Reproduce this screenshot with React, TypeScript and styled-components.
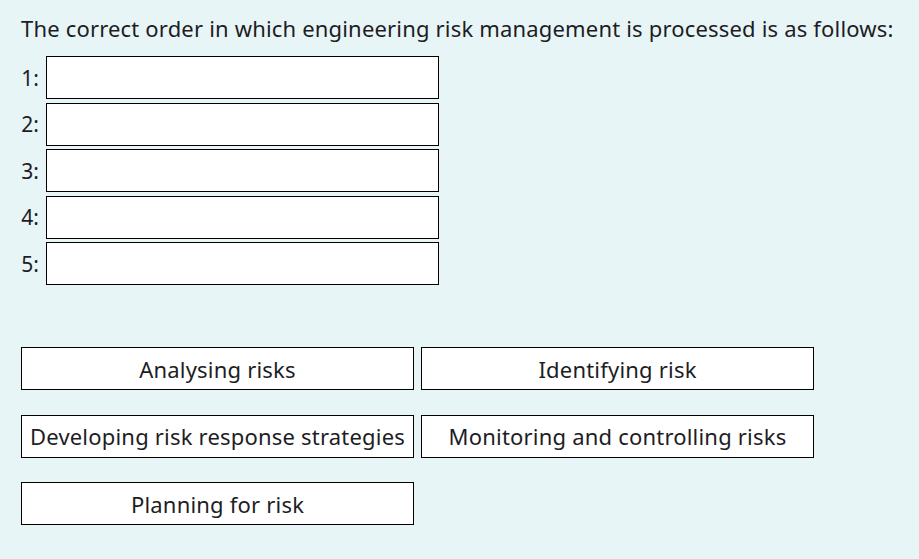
import React, {FC} from 'react';
import styled, {createGlobalStyle} from "styled-components";

const steps = [1, 2, 3, 4, 5]

const options = [
    'Analysing risks',
    'Identifying risk',
    'Developing risk response strategies',
    'Monitoring and controlling risks',
    'Planning for risk',
]

const App: FC = () => {
    return (
        <>
            <GlobalStyle/>
            <Page>
                <Question>
                    The correct order in which engineering risk management is processed is as follows:
                </Question>

                <Slots>
                    {steps.map(n => (
                        <Slot key={n}>
                            <SlotLabel>{n}:</SlotLabel>
                            <DropBox/>
                        </Slot>
                    ))}
                </Slots>

                <Options>
                    {options.map(text => (
                        <Option key={text}>{text}</Option>
                    ))}
                </Options>
            </Page>
        </>
    );
};

const GlobalStyle = createGlobalStyle`
  html, body {
    margin: 0;
    padding: 0;
    background-color: #e7f5f7;
  }

  body {
    font-family: "Noto Sans", "Open Sans", sans-serif;
    color: #1d1d24;
  }
`

const Page = styled.div`
  width: 919px;
  height: 559px;
  box-sizing: border-box;
  padding: 12px 0 0 21px;
`

const Question = styled.div`
  font-size: 22px;
  line-height: 32px;
  letter-spacing: 0.18px;
  margin-bottom: 12px;
`

const Slots = styled.div`
  display: flex;
  flex-direction: column;
  gap: 3.5px;
`

const Slot = styled.div`
  display: flex;
  align-items: center;
`

const SlotLabel = styled.span`
  width: 18px;
  margin-right: 7px;
  text-align: right;
  font-size: 21px;
`

const DropBox = styled.div`
  width: 393px;
  height: 43px;
  box-sizing: border-box;
  background-color: #fff;
  border: 1px solid #000;
`

const Options = styled.div`
  display: grid;
  grid-template-columns: 393px 393px;
  column-gap: 7px;
  row-gap: 24.5px;
  margin-top: 62px;
`

const Option = styled.div`
  height: 43px;
  box-sizing: border-box;
  display: flex;
  align-items: center;
  justify-content: center;
  background-color: #fff;
  border: 1px solid #000;
  font-size: 22px;
  letter-spacing: 0.2px;
  white-space: nowrap;
`

export default App;
